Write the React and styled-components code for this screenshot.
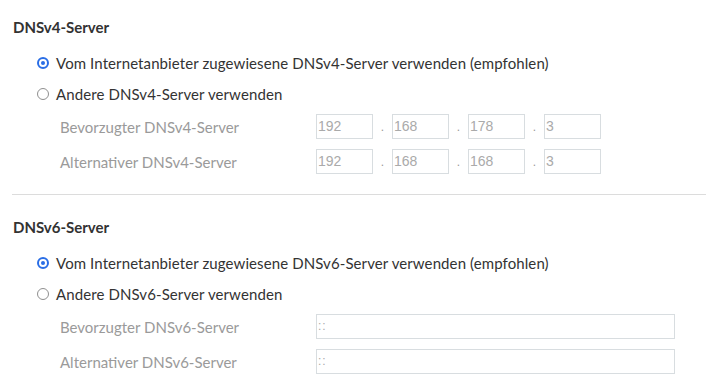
import React from 'react'
import styled, { createGlobalStyle } from 'styled-components'

const GlobalStyle = createGlobalStyle`
  body {
    margin: 0;
    background: #fff;
    font-family: Lato, "Noto Sans", sans-serif;
    color: #333;
  }
`

const Page = styled.div`
  width: 706px;
  padding-left: 12px;
  box-sizing: border-box;
`

const Section = styled.div`
  padding-top: ${p => p.top}px;
  padding-bottom: ${p => p.bottom || 0}px;
  border-bottom: ${p => (p.divider ? '1px solid #dcdcdc' : 'none')};
`

const Heading = styled.h3`
  margin: 0 0 10px 1px;
  height: 20px;
  line-height: 20px;
  font-size: 15px;
  font-weight: 700;
  color: #333;
`

const RadioRow = styled.label`
  display: flex;
  align-items: center;
  height: 31px;
  padding-left: 25px;
  font-size: 15px;
  letter-spacing: 0.1px;
  color: #333;
`

const RadioMark = styled.span`
  width: 12px;
  height: 12px;
  box-sizing: border-box;
  border-radius: 50%;
  border: ${p => (p.checked ? '2px solid #2a6ee6' : '1.5px solid #8f8f8f')};
  margin-right: 7px;
  display: flex;
  align-items: center;
  justify-content: center;

  &::after {
    content: '';
    display: ${p => (p.checked ? 'block' : 'none')};
    width: 4px;
    height: 4px;
    border-radius: 50%;
    background: #2a6ee6;
  }
`

const FieldRow = styled.div`
  display: flex;
  align-items: center;
  height: 35px;
`

const FieldLabel = styled.span`
  width: 304px;
  padding-left: 48px;
  box-sizing: border-box;
  font-size: 15px;
  color: #9a9a9a;
`

const IpGroup = styled.div`
  display: flex;
  align-items: center;
`

const Octet = styled.div`
  width: 57px;
  height: 25px;
  box-sizing: border-box;
  border: 1px solid #d8dde0;
  padding-left: 1px;
  font-family: "Liberation Sans", Arial, sans-serif;
  font-size: 14px;
  line-height: 23px;
  color: #aaa;
`

const Dot = styled.span`
  width: 19px;
  text-align: center;
  font-family: "Liberation Sans", sans-serif;
  font-size: 12px;
  color: #999;
`

const WideInput = styled(Octet)`
  width: 359px;
  letter-spacing: 1px;
  font-size: 12px;
`

const IpInput = ({ parts }) => (
  <IpGroup>
    {parts.map((p, i) => (
      <React.Fragment key={i}>
        {i > 0 && <Dot>.</Dot>}
        <Octet>{p}</Octet>
      </React.Fragment>
    ))}
  </IpGroup>
)

const App = () => (
  <Page>
    <GlobalStyle />
    <Section top={17} bottom={15} divider>
      <Heading>DNSv4-Server</Heading>
      <RadioRow>
        <RadioMark checked />
        Vom Internetanbieter zugewiesene DNSv4-Server verwenden (empfohlen)
      </RadioRow>
      <RadioRow>
        <RadioMark />
        Andere DNSv4-Server verwenden
      </RadioRow>
      <FieldRow>
        <FieldLabel>Bevorzugter DNSv4-Server</FieldLabel>
        <IpInput parts={['192', '168', '178', '3']} />
      </FieldRow>
      <FieldRow>
        <FieldLabel>Alternativer DNSv4-Server</FieldLabel>
        <IpInput parts={['192', '168', '168', '3']} />
      </FieldRow>
    </Section>
    <Section top={22}>
      <Heading>DNSv6-Server</Heading>
      <RadioRow>
        <RadioMark checked />
        Vom Internetanbieter zugewiesene DNSv6-Server verwenden (empfohlen)
      </RadioRow>
      <RadioRow>
        <RadioMark />
        Andere DNSv6-Server verwenden
      </RadioRow>
      <FieldRow>
        <FieldLabel>Bevorzugter DNSv6-Server</FieldLabel>
        <WideInput>::</WideInput>
      </FieldRow>
      <FieldRow>
        <FieldLabel>Alternativer DNSv6-Server</FieldLabel>
        <WideInput>::</WideInput>
      </FieldRow>
    </Section>
  </Page>
)

export default App
